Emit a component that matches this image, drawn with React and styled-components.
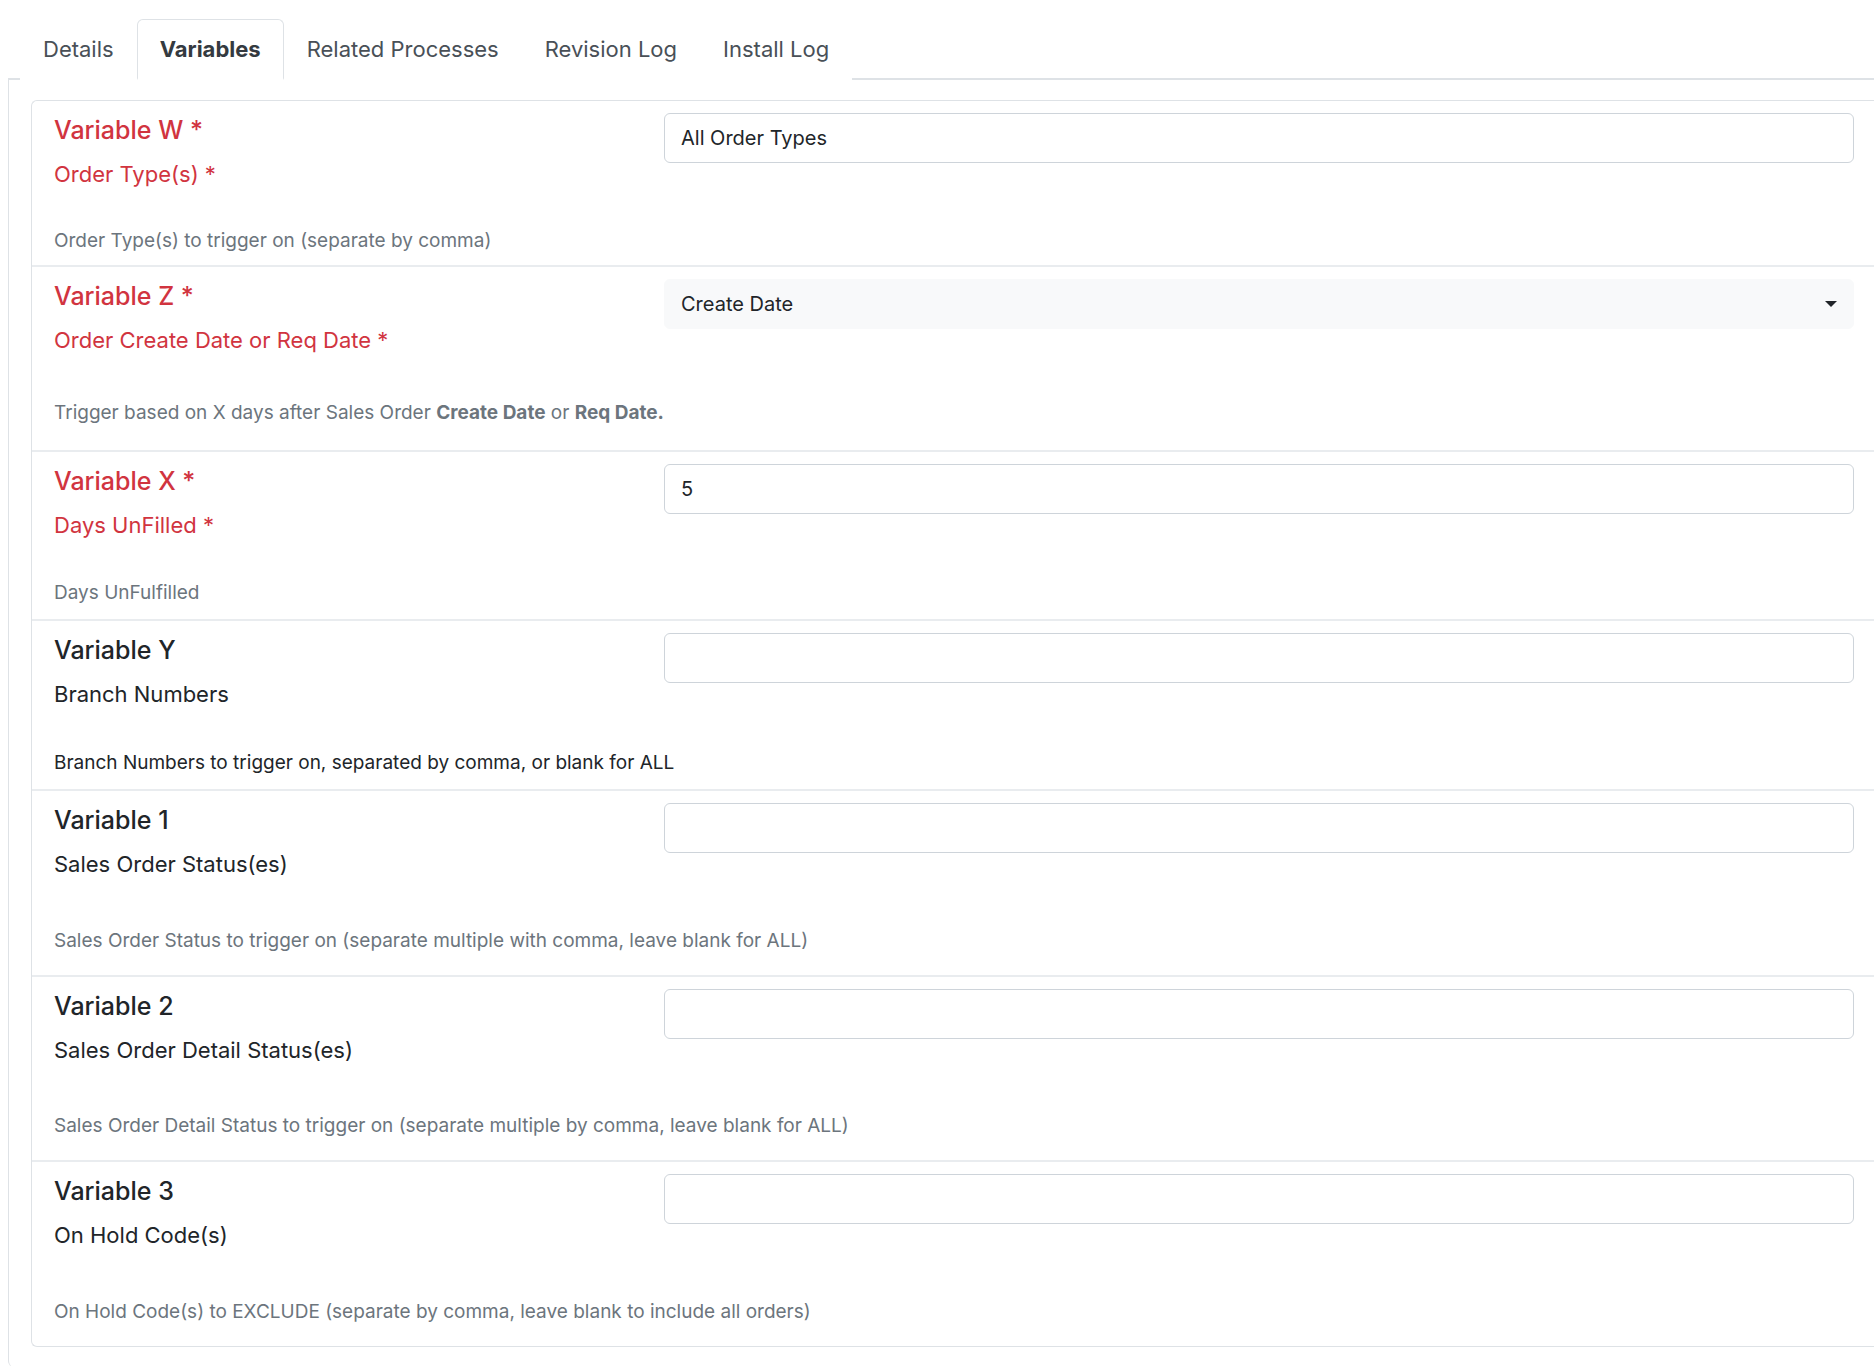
import React from 'react';
import styled, { createGlobalStyle } from 'styled-components';

const Global = createGlobalStyle`
  body { margin: 0; background: #fff; font-family: Inter, "Liberation Sans", sans-serif; color: #212529; }
  * { box-sizing: border-box; }
`

const Page = styled.div`
  padding: 19px 0 0 8px;
`

const Tabs = styled.div`
  display: flex;
  padding-left: 12px;
  border-bottom: 2px solid #dee2e6;
`

const Tab = styled.div`
  font-size: 22px;
  padding: 0 ${p => (p.active ? 22 : 22)}px;
  height: 61px;
  line-height: 58px;
  margin-bottom: -2px;
  color: ${p => (p.active ? '#343a40' : '#495057')};
  font-weight: ${p => (p.active ? 700 : 400)};
  border: 1px solid ${p => (p.active ? '#dee2e6' : 'transparent')};
  border-bottom: 2px solid ${p => (p.active ? '#fff' : 'transparent')};
  border-radius: 6px 6px 0 0;
  background: #fff;
`

const Panel = styled.div`
  border-left: 1px solid #dee2e6;
  padding: 20px 0 20px 22px;
  border-bottom-left-radius: 6px;
`

const List = styled.div`
  border: 1px solid #dee2e6;
  border-right: none;
  border-radius: 6px 0 0 6px;
`

const Row = styled.div`
  display: grid;
  grid-template-columns: 610px 1fr;
  padding: 12px 20px 0 22px;
  min-height: ${p => p.h}px;
  border-top: ${p => (p.first ? 'none' : '2px solid #e9ecef')};
`

const Labels = styled.div`
  padding-top: 2px;
`

const Title = styled.div`
  font-size: 25px;
  font-weight: 500;
  line-height: 30px;
  color: ${p => (p.req ? '#d1343f' : '#212529')};
`

const Sub = styled.div`
  font-size: 22px;
  line-height: 30px;
  margin-top: 14px;
  color: ${p => (p.req ? '#d1343f' : '#212529')};
`

const Desc = styled.div`
  grid-column: 1 / 3;
  font-size: 19px;
  margin-top: ${p => p.mt}px;
  color: ${p => (p.dark ? '#212529' : '#6c757d')};
  b { font-weight: 700; }
`

const Input = styled.div`
  height: 50px;
  border: 1px solid #ced4da;
  border-radius: 6px;
  padding: 0 16px;
  font-size: 20px;
  line-height: 48px;
  background: #fff;
`

const Select = styled(Input)`
  border-color: #f8f9fa;
  background: #f8f9fa;
  display: flex;
  justify-content: space-between;
  align-items: center;
`

const Caret = styled.span`
  width: 0;
  height: 0;
  border-left: 6px solid transparent;
  border-right: 6px solid transparent;
  border-top: 6px solid #212529;
`

const rows = [
  { t: 'Variable W *', s: 'Order Type(s) *', d: 'Order Type(s) to trigger on (separate by comma)', v: 'All Order Types', req: true, h: 164, mt: 26 },
  { t: 'Variable Z *', s: 'Order Create Date or Req Date *', d: <>Trigger based on X days after Sales Order <b>Create Date</b> or <b>Req Date.</b></>, v: 'Create Date', sel: true, req: true, h: 185, mt: 20 },
  { t: 'Variable X *', s: 'Days UnFilled *', d: 'Days UnFulfilled', v: '5', req: true, h: 169, mt: 26 },
  { t: 'Variable Y', s: 'Branch Numbers', d: 'Branch Numbers to trigger on, separated by comma, or blank for ALL', v: '', dark: true, h: 170, mt: 26 },
  { t: 'Variable 1', s: 'Sales Order Status(es)', d: 'Sales Order Status to trigger on (separate multiple with comma, leave blank for ALL)', v: '', h: 186, mt: 26 },
  { t: 'Variable 2', s: 'Sales Order Detail Status(es)', d: 'Sales Order Detail Status to trigger on (separate multiple by comma, leave blank for ALL)', v: '', h: 185, mt: 26 },
  { t: 'Variable 3', s: 'On Hold Code(s)', d: 'On Hold Code(s) to EXCLUDE (separate by comma, leave blank to include all orders)', v: '', h: 186, mt: 26 },
]

export default function App() {
  return (
    <Page>
      <Global />
      <Tabs>
        <Tab>Details</Tab>
        <Tab active>Variables</Tab>
        <Tab>Related Processes</Tab>
        <Tab>Revision Log</Tab>
        <Tab>Install Log</Tab>
      </Tabs>
      <Panel>
        <List>
          {rows.map((r, i) => (
            <Row key={i} first={i === 0} h={r.h}>
              <Labels>
                <Title req={r.req}>{r.t}</Title>
                <Sub req={r.req}>{r.s}</Sub>
              </Labels>
              <div>
                {r.sel ? (
                  <Select>{r.v}<Caret /></Select>
                ) : (
                  <Input>{r.v}</Input>
                )}
              </div>
              <Desc mt={r.mt} dark={r.dark}>{r.d}</Desc>
            </Row>
          ))}
        </List>
      </Panel>
    </Page>
  )
}
